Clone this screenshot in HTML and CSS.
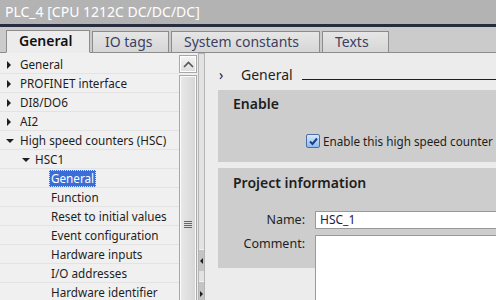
FILE: index.html
```html
<!DOCTYPE html>
<html lang="en">
<head>
    <meta charset="UTF-8">
    <title>PLC_4 Properties</title>
    <link rel="stylesheet" href="styles.css">
</head>
<body>
    <div class="window">
        <div class="titlebar">PLC_4 [CPU 1212C DC/DC/DC]</div>
        <div class="tabstrip">
            <div class="tab active">General</div>
            <div class="tab">IO tags</div>
            <div class="tab">System constants</div>
            <div class="tab">Texts</div>
        </div>
        <div class="main">
            <div class="tree">
                <div class="row"><span class="arrow right"></span>General</div>
                <div class="row"><span class="arrow right"></span>PROFINET interface</div>
                <div class="row"><span class="arrow right"></span>DI8/DO6</div>
                <div class="row"><span class="arrow right"></span>AI2</div>
                <div class="row"><span class="arrow down"></span>High speed counters (HSC)</div>
                <div class="row level1"><span class="arrow down"></span>HSC1</div>
                <div class="row level2"><span class="selected">General</span></div>
                <div class="row level2">Function</div>
                <div class="row level2">Reset to initial values</div>
                <div class="row level2">Event configuration</div>
                <div class="row level2">Hardware inputs</div>
                <div class="row level2">I/O addresses</div>
                <div class="row level2">Hardware identifier</div>
            </div>
            <div class="scrollbar">
                <div class="scroll-btn">
                    <svg width="11" height="7" viewBox="0 0 11 7"><path d="M1 6 L5.5 1.5 L10 6" fill="none" stroke="#555" stroke-width="1.6"/></svg>
                </div>
                <div class="scroll-thumb">
                    <div class="grip"><span></span><span></span><span></span><span></span></div>
                </div>
            </div>
            <div class="splitter">
                <div class="split-btn first"><span class="tri left"></span></div>
                <div class="split-btn"><span class="tri rightt"></span></div>
            </div>
            <div class="content">
                <div class="heading">
                    <span class="chev">&rsaquo;</span>
                    <span class="heading-text">General</span>
                    <span class="heading-line"></span>
                </div>
                <div class="section enable">
                    <div class="section-title">Enable</div>
                    <label class="check">
                        <span class="box">
                            <svg width="11" height="11" viewBox="0 0 11 11"><path d="M2 5.5 L4.5 8 L9 2.5" fill="none" stroke="#1d3f8a" stroke-width="2"/></svg>
                        </span>
                        Enable this high speed counter
                    </label>
                </div>
                <div class="section project">
                    <div class="section-title">Project information</div>
                    <div class="field">
                        <span class="label">Name:</span>
                        <div class="input">HSC_1</div>
                    </div>
                    <div class="field">
                        <span class="label">Comment:</span>
                        <div class="input textarea"></div>
                    </div>
                </div>
            </div>
        </div>
    </div>
</body>
</html>
```

FILE: styles.css
```css
* {
    box-sizing: border-box;
}

body {
    margin: 0;
    padding: 0;
    font-family: 'Noto Sans', sans-serif;
    font-size: 12px;
    color: #1e1e1e;
    background: #ececec;
}

.window {
    width: 496px;
    height: 300px;
    overflow: hidden;
}

.titlebar {
    height: 27px;
    background: #b3b3b3;
    border-bottom: 3px solid #272c3e;
    color: #ffffff;
    font-size: 14px;
    line-height: 24px;
    padding-left: 5px;
}

.tabstrip {
    height: 26px;
    background: #cbcbcb;
    border-bottom: 1px solid #8c8c8c;
    display: flex;
    align-items: flex-end;
    gap: 2px;
    padding-left: 6px;
}

.tab {
    flex-shrink: 0;
    height: 22px;
    margin-bottom: -1px;
    border: 1px solid #8c8c8c;
    background: linear-gradient(#e6e6e6, #d6d6d6);
    color: #3d4060;
    font-size: 14px;
    line-height: 20px;
    padding: 0 0 0 12px;
}

.tab:nth-child(2) { width: 77px; }
.tab:nth-child(3) { width: 149px; }
.tab:nth-child(4) { width: 67px; }

.tab.active {
    width: 84px;
    height: 23px;
    background: #ececec;
    border-bottom-color: #ececec;
    color: #101010;
    font-weight: 600;
}

.main {
    display: flex;
    height: 247px;
}

.tree {
    flex-shrink: 0;
    width: 179px;
    background: #f0f0f0;
    padding-top: 2px;
}

.row {
    height: 19px;
    line-height: 18px;
    border-bottom: 1px solid #e3e3e3;
    padding-left: 20px;
    position: relative;
    white-space: nowrap;
    font-size: 11.7px;
}

.row.level1 { padding-left: 35px; }
.row.level2 { padding-left: 51px; }

.arrow {
    position: absolute;
    width: 0;
    height: 0;
}

.arrow.right {
    left: 7px;
    top: 6px;
    border-top: 4px solid transparent;
    border-bottom: 4px solid transparent;
    border-left: 4px solid #1e1e1e;
}

.arrow.down {
    left: 6px;
    top: 8px;
    border-left: 4px solid transparent;
    border-right: 4px solid transparent;
    border-top: 4px solid #1e1e1e;
}

.row.level1 .arrow.down { left: 22px; }

.selected {
    display: inline-block;
    margin-left: -2px;
    padding: 0 1px;
    height: 17px;
    line-height: 15px;
    background: #3a6ed6;
    color: #ffffff;
    border: 1px dotted #d8e2f6;
}

.scrollbar {
    flex-shrink: 0;
    width: 18px;
    background: #f0f0f0;
    padding-top: 2px;
}

.scroll-btn {
    height: 18px;
    border: 1px solid #a8a8a8;
    background: linear-gradient(#f4f4f4, #dcdcdc);
    display: flex;
    align-items: center;
    justify-content: center;
    box-shadow: inset 0 0 0 1px #ffffff;
}

.scroll-thumb {
    margin-top: 2px;
    height: 240px;
    border: 1px solid #a8a8a8;
    background: linear-gradient(to right, #e9e9e9, #d6d6d6);
    box-shadow: inset 0 0 0 1px #fafafa;
    padding-top: 145px;
}

.grip {
    display: flex;
    flex-direction: column;
    align-items: center;
    gap: 1px;
}

.grip span {
    width: 8px;
    height: 1px;
    background: #666666;
}

.splitter {
    flex-shrink: 0;
    width: 7px;
    margin-left: 1px;
    border: 1px solid #b4b4b4;
    border-bottom: none;
    background: #e2e2e2;
    display: flex;
    flex-direction: column;
    padding-top: 195px;
    gap: 10px;
}

.split-btn {
    height: 24px;
    background: #c4c4c4;
    border-top: 1px solid #f4f4f4;
    display: flex;
    align-items: center;
    justify-content: center;
}

.split-btn + .split-btn {
    height: 20px;
    padding-top: 6px;
}

.tri {
    width: 0;
    height: 0;
    border-top: 3px solid transparent;
    border-bottom: 3px solid transparent;
}

.tri.left { border-right: 3px solid #1e1e1e; }
.tri.rightt { border-left: 3px solid #1e1e1e; }

.content {
    flex: 1;
    min-width: 0;
    background: #ececec;
    padding-left: 13px;
}

.heading {
    height: 37px;
    display: flex;
    align-items: center;
    padding-top: 6px;
}

.chev {
    width: 23px;
    font-size: 14px;
    line-height: 14px;
    padding-left: 1px;
}

.heading-text {
    font-size: 14px;
    color: #1e1e1e;
    width: 61px;
}

.heading-line {
    flex: 1;
    height: 1px;
    background: #1e1e1e;
    margin-top: 10px;
}

.section {
    background: #cdcdcd;
    padding-left: 15px;
}

.section-title {
    font-size: 14px;
    font-weight: 600;
    padding-top: 3px;
    line-height: 20px;
}

.enable {
    height: 72px;
    margin-bottom: 6px;
}

.enable .section-title {
    padding-top: 4px;
}

.check {
    display: flex;
    align-items: center;
    gap: 3px;
    margin-top: 19px;
    margin-left: 73px;
    white-space: nowrap;
    font-size: 11.7px;
}

.box {
    flex-shrink: 0;
    width: 14px;
    height: 14px;
    border: 1px solid #4a6fa6;
    border-radius: 2px;
    background: linear-gradient(#d6e8fb, #8fbbec);
    display: flex;
    align-items: center;
    justify-content: center;
}

.project {
    height: 100px;
    padding-top: 2px;
}

.project .section-title {
    margin-bottom: 18px;
}

.field {
    display: flex;
    align-items: flex-start;
    margin-bottom: 6px;
}

.label {
    flex-shrink: 0;
    width: 82px;
    text-align: right;
    padding-right: 10px;
    font-size: 12.5px;
    line-height: 18px;
}

.input {
    flex: 1;
    height: 18px;
    background: #ffffff;
    border: 1px solid #9a9a9a;
    border-right: none;
    font-size: 12px;
    line-height: 16px;
    padding-left: 4px;
    color: #1b1b4a;
}

.input.textarea {
    height: 80px;
}
```
